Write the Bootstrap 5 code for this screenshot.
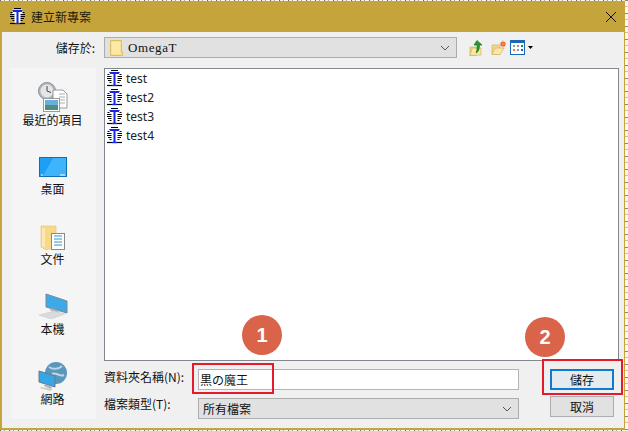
<!DOCTYPE html>
<html lang="zh-Hant">
<head>
<meta charset="utf-8">
<title>建立新專案</title>
<link rel="stylesheet" href="https://cdn.jsdelivr.net/npm/bootstrap@5.3.0/dist/css/bootstrap.min.css">
<style>
html,body{margin:0;height:431px;overflow:hidden;background:#fff}
body{font:12px/16px "Noto Sans CJK TC","Noto Sans",sans-serif;color:#111;position:relative}
.shell{width:625px;height:429px;margin-top:1px;border:solid #c6a43c;border-width:0 1px 2px 2px;background:#f0f0f0;display:flex;flex-direction:column}
.titlebar{height:31px;flex:none;background:#c6a43c;padding-left:7px;gap:5px;font-size:12px;color:#1d1a0c}
.closex{margin-left:auto;margin-right:7px;width:12px;height:12px}
.pane{flex:1;min-height:0}
.looklabel{width:102px;text-align:right;padding-right:9px}
.lookrow{height:25px;margin-top:3px}
.combo{background:#e1e1e1;border:1px solid #adadad;height:21px;display:flex;align-items:center}
.lookcombo{width:353px;padding-left:5px;gap:5px}
.omega{font:13px "Liberation Serif",serif;letter-spacing:.6px}
.chev{margin-left:auto;margin-right:6px;width:10px;height:6px}
.tools{gap:4px;margin-left:12px}
.tool2{margin-left:4px}
.tool4{margin-left:-1px}
.mainrow{margin-top:8px;height:351px}
.side{width:85px;margin-left:9px;padding-right:2px;background:#f5f5f5;flex:none}
.place{text-align:center;display:flex;flex-direction:column;align-items:center}
.p1{margin-top:14px}.p2{margin-top:29px}.p3{margin-top:28px}.p4{margin-top:26px}.p5{margin-top:25px}
.lab2{margin-top:4px}.lab4{margin-top:2px}
.content{margin-left:8px;width:515px;flex:none}
.files{height:293px;background:#fff;border:1px solid #828790;padding:0 0 0 1px}
.fileitem{height:19px;gap:3px;font:12px "Noto Sans",sans-serif;color:#222}
.fieldrow{height:29px}
.fieldlab{width:94px;white-space:nowrap}
.labtype{margin-top:-2px}
.nameinput{width:321px;height:21px;border:1px solid #b5b5b5;background:#fff;padding:0 1px;line-height:19px}
.typecombo{width:321px;padding-left:4px}
.winbtn{width:64px;height:21px;border:1px solid #adadad;background:#e1e1e1;font-size:12px;line-height:18px;padding:0;border-radius:0;color:#111;display:block}
.winbtn.pick{border:2px solid #0f7ad2;background:#e5eaee;line-height:17px}
.btncol{width:64px;margin-left:31px;flex:none;gap:6px}
.redbox{position:absolute;border:2px solid #e31b2c}
.rb1{left:192px;top:363px;width:82px;height:31px}
.rb2{left:542px;top:359px;width:81px;height:36px}
.step{position:absolute;width:40px;height:40px;border-radius:50%;background:#d9644a;color:#fff;font:bold 20px/40px "Liberation Sans",sans-serif;text-align:center}
.s1{left:242px;top:315px}
.s2{left:525px;top:317px}
.junk{position:absolute;background:repeating-linear-gradient(90deg,#6a6a5c 0 1px,#f2efe2 1px 4px,#b0a680 4px 5px,#faf8f0 5px 9px)}
.jt{left:0;right:0;top:0;height:1px}
.jb{left:0;right:0;top:430px;height:1px}
.jr{left:625px;width:3px;top:0;height:431px;background:repeating-linear-gradient(180deg,#8a8a7c 0 1px,#f6f3e8 1px 6px,#d8c480 6px 7px,#faf8f0 7px 13px)}
</style>
</head>
<body>
<svg width="0" height="0" class="position-absolute">
  <defs>
    <symbol id="omg" viewBox="0 0 17 17">
      <g stroke="#000" stroke-width="1">
        <path d="M5 .5h7M3 2.500h11M1.500 4.500h14M1 6.500h15M1 8.500h15M2 10.500h13M3.500 12.500h10"/>
      </g>
      <path d="M3.500 1.500h10v4.500h-10zM5.500 6h6v9h-6z" fill="#fff"/>
      <path d="M4 3h9M8.500 3v12.500" stroke="#1426e6" stroke-width="2" fill="none"/>
      <path d="M1 15.500h15" stroke="#000" stroke-width="1.200"/>
      <path d="M6 15.500h5" stroke="#1426e6" stroke-width="1.200"/>
    </symbol>
  </defs>
</svg>
<div class="junk jt"></div>
<div class="junk jb"></div>
<div class="junk jr"></div>
<div class="shell">
  <div class="titlebar d-flex align-items-center">
    <svg width="17" height="17"><use href="#omg"/></svg>
    <span>建立新專案</span>
    <svg class="closex" viewBox="0 0 12 12"><path d="M1 1l10 10M11 1L1 11" stroke="#111" stroke-width="1"/></svg>
  </div>
  <div class="pane">
    <div class="lookrow d-flex align-items-center">
      <div class="looklabel">儲存於:</div>
      <div class="combo lookcombo">
        <svg width="13" height="16" viewBox="0 0 13 16"><path d="M.5.500h11v11.500h1v3.500H.500z" fill="#fde08a" stroke="#dcbc66"/><path d="M2 2h8v12H2z" fill="#ffe9a6"/></svg>
        <span class="omega">OmegaT</span>
        <svg class="chev" viewBox="0 0 10 6"><path d="M1 1l4 4 4-4" fill="none" stroke="#555"/></svg>
      </div>
      <div class="tools d-flex align-items-center">
        <svg width="14" height="16" viewBox="0 0 14 16"><path d="M1 7h6v9H1z" fill="#f4d98a" stroke="#c9a94f" stroke-width=".6"/><path d="M1 15.500L3 8h9v7z" fill="#fbe7a8" stroke="#c9a94f" stroke-width=".6"/><path d="M8 .5l5 4.500h-2.500c0 4-1 7-3.500 8 1-2 1.200-5 1-8H5z" fill="#2c9a2c" stroke="#0d650d" stroke-width=".6"/></svg>
        <svg class="tool2" width="15" height="15" viewBox="0 0 15 15"><path d="M1 5h7l1 1v8H1z" fill="#f4d98a" stroke="#c9a94f" stroke-width=".6"/><path d="M1 14.500l3-6.500h9l-4 6.500z" fill="#fbe7a8" stroke="#c9a94f" stroke-width=".6"/><circle cx="12" cy="4" r="2.600" fill="#ee5a2a"/><path d="M12 0v8M8 4h7" stroke="#f7b060" stroke-width=".6"/></svg>
        <svg width="15" height="15" viewBox="0 0 15 15"><rect x=".5" y=".5" width="14" height="14" fill="#fff" stroke="#1a66b8"/><rect x="1" y="1" width="13" height="2" fill="#1a66b8"/><path d="M3 5h2v2H3zM7 5h2v2H7z" fill="#8a96a8"/><path d="M11 5h2v2h-2z" fill="#2a8a2a"/><path d="M3 9h2v2H3z" fill="#e07a4a"/><path d="M7 9h2v2H7z" fill="#8a96a8"/><path d="M11 9h2v2h-2z" fill="#1a66b8"/></svg>
        <svg class="tool4" width="5" height="3" viewBox="0 0 5 3"><path d="M0 0h5L2.500 3z" fill="#000"/></svg>
      </div>
    </div>
    <div class="mainrow d-flex">
      <div class="side d-flex flex-column">
        <div class="place p1">
          <svg width="30" height="30" viewBox="0 0 30 30"><circle cx="9" cy="9" r="8.500" fill="#b4b8bc" stroke="#8c9094"/><circle cx="9" cy="9" r="6.500" fill="#e4e6e8"/><path d="M9 4v5l4 1.500" fill="none" stroke="#444"/><path d="M15 8h10l4 4v14H15z" fill="#fff" stroke="#999"/><path d="M21 12h6M21 15h6M21 18h6M21 21h6" stroke="#a6aebc"/><rect x="5.500" y="16.500" width="16" height="13" fill="#fff" stroke="#9a9a9a"/><rect x="7" y="18" width="13" height="5" fill="#6aaede"/><rect x="7" y="23" width="13" height="5" fill="#4d8f78"/></svg>
          <span>最近的項目</span>
        </div>
        <div class="place p2">
          <svg width="28" height="20" viewBox="0 0 28 20"><rect x=".5" y=".5" width="27" height="19" fill="#1ba0f4" stroke="#0f6fb0"/><path d="M14 1h13v18H4z" fill="#3fb4fa"/><path d="M2 18h2M21 18h5" stroke="#fff"/></svg>
          <span class="lab2">桌面</span>
        </div>
        <div class="place p3">
          <svg width="26" height="26" viewBox="0 0 26 26"><path d="M1 1h15v21L6 25 1 22z" fill="#f7d98a" stroke="#e3c470" stroke-width=".6"/><path d="M2 3h3v19H2z" fill="#fbe9b4"/><rect x="11.500" y="8.500" width="13" height="16" fill="#fff" stroke="#8a8a8a"/><path d="M14 11h8M14 14h8M14 17h8M14 20h8" stroke="#3d8fc4"/></svg>
          <span>文件</span>
        </div>
        <div class="place p4">
          <svg width="30" height="26" viewBox="0 0 30 26"><path d="M8 1l21 7v12L8 14z" fill="#3fa8e6" stroke="#7a8a96"/><path d="M13 15l8 3-2 2-7-3z" fill="#aeb2b6"/><path d="M1 22l15-4 11 3-14 5z" fill="#d8dadc" stroke="#c4c6c8" stroke-width=".5"/></svg>
          <span class="lab4">本機</span>
        </div>
        <div class="place p5">
          <svg width="30" height="29" viewBox="0 0 30 29"><circle cx="18" cy="11" r="11" fill="#5b97ba"/><path d="M11 5c4 3 10 2 13-1M14 12c4-2 8 3 12 1" stroke="#b9d8e8" stroke-width="2" fill="none"/><path d="M1 9l16 5v11L1 20z" fill="#35a6e8" stroke="#6a7a86"/><path d="M7 22l7 3-1 2-7-3z" fill="#aeb2b6"/><path d="M3 25l12 2-3 2-10-3z" fill="#c9ccce"/></svg>
          <span>網路</span>
        </div>
      </div>
      <div class="content d-flex flex-column">
        <div class="files">
          <div class="fileitem d-flex align-items-center"><svg width="17" height="17"><use href="#omg"/></svg>test</div>
          <div class="fileitem d-flex align-items-center"><svg width="17" height="17"><use href="#omg"/></svg>test2</div>
          <div class="fileitem d-flex align-items-center"><svg width="17" height="17"><use href="#omg"/></svg>test3</div>
          <div class="fileitem d-flex align-items-center"><svg width="17" height="17"><use href="#omg"/></svg>test4</div>
        </div>
        <div class="d-flex mt-2">
          <div>
            <div class="fieldrow d-flex align-items-start">
              <span class="fieldlab">資料夾名稱(N):</span>
              <div class="nameinput">黒の魔王</div>
            </div>
            <div class="d-flex align-items-start">
              <span class="fieldlab labtype">檔案類型(T):</span>
              <div class="combo typecombo">所有檔案<svg class="chev" viewBox="0 0 10 6"><path d="M1 1l4 4 4-4" fill="none" stroke="#555"/></svg></div>
            </div>
          </div>
          <div class="btncol d-flex flex-column">
            <button type="button" class="btn winbtn pick">儲存</button>
            <button type="button" class="btn winbtn">取消</button>
          </div>
        </div>
      </div>
    </div>
  </div>
</div>
<div class="redbox rb1"></div>
<div class="redbox rb2"></div>
<div class="step s1">1</div>
<div class="step s2">2</div>
</body>
</html>
